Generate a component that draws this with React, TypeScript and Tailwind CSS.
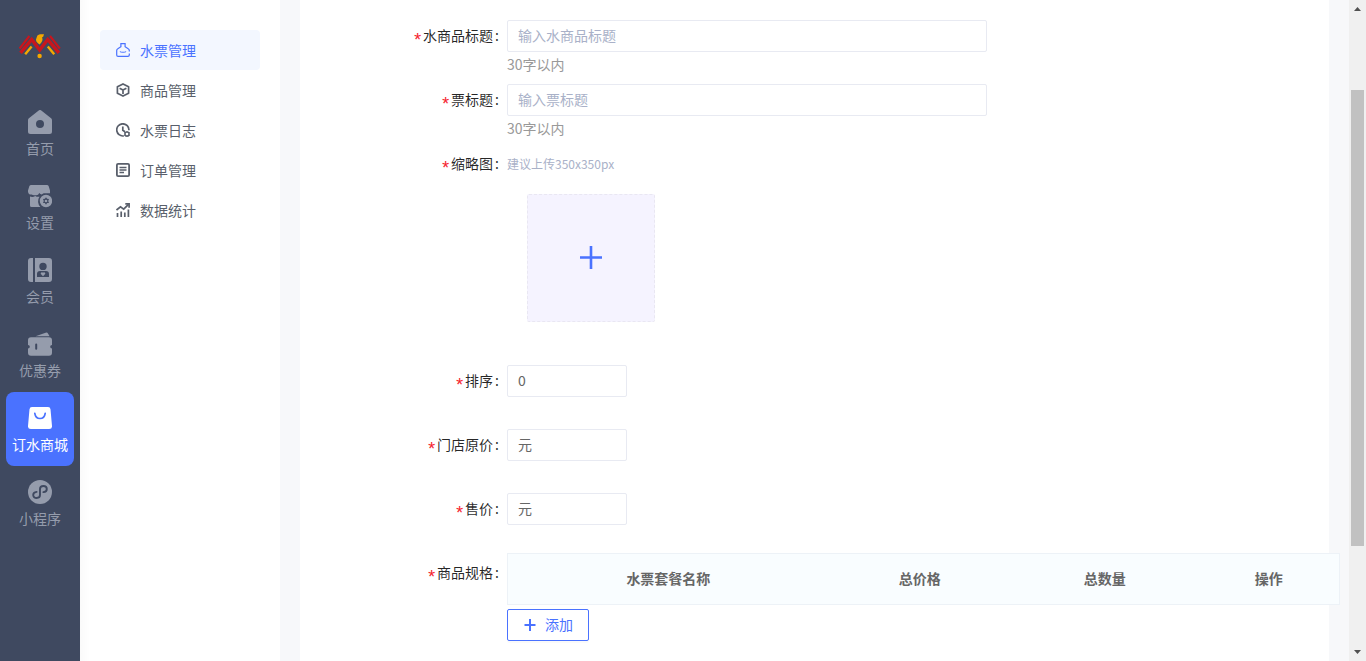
import React from "react";

type IconProps = { className?: string };

function Logo() {
  return (
    <svg viewBox="0 0 42 26" className="h-[26px] w-[42px]" aria-hidden="true">
      <g fill="none" stroke="#c8161d" strokeLinejoin="miter">
        <path d="M.6 15.500 10.400 3" strokeWidth="2.100" />
        <path d="M1.500 19.800 12.700 6.500 20.700 17 28.700 6.500 39.900 19.800" strokeWidth="3.400" />
        <path d="M40.800 15.500 31 3" strokeWidth="2.100" />
      </g>
      <path d="M6.200 21.200 12.600 13.500M35.200 21.200 28.800 13.500" stroke="#f5a800" strokeWidth="2.400" fill="none" />
      <path d="M18.400 2.600C20 .9 22.200 1 25 1.300L24.200 3.800 23.100 4.200C24.200 6.800 23 9 20.600 11.400 17.600 9.400 16.200 7.400 17.400 5.200Z" fill="#f5a800" />
      <circle cx="20.600" cy="23" r="2.200" fill="#f5a800" />
    </svg>
  );
}

function HomeIcon({ className }: IconProps) {
  return (
    <svg viewBox="0 0 24 24" className={className} fill="currentColor" aria-hidden="true">
      <path fillRule="evenodd" d="M10.7.5a2 2 0 0 1 2.6 0L23.1 8.300a2.400 2.400 0 0 1 .9 1.900V21.500A2.500 2.500 0 0 1 21.500 24h-19A2.500 2.500 0 0 1 0 21.500V10.200a2.400 2.400 0 0 1 .9-1.900ZM12 10a4 4 0 1 0 0 8 4 4 0 0 0 0-8Z" />
    </svg>
  );
}

function StoreIcon({ className }: IconProps) {
  return (
    <svg viewBox="0 0 24 24" className={className} fill="currentColor" aria-hidden="true">
      <path d="M3.200 1h15.600a2 2 0 0 1 1.900 1.300L22 6.500V9.200H15.800A8 8 0 0 0 13.800 10.400 3 3 0 0 1 11.300 9 3.600 3.600 0 0 1 7.200 11.200 4.500 4.500 0 0 1 3.600 10.600 3.400 3.400 0 0 1 0 7.700V6.500L1.300 2.300A2 2 0 0 1 3.200 1Z" />
      <path d="M2 12.600a8 8 0 0 0 2.200.3 6 6 0 0 0 3-.9 6 6 0 0 0 4.300.7A8 8 0 0 0 12.400 23H3.500A1.500 1.500 0 0 1 2 21.500Z" />
      <path fillRule="evenodd" d="M18 10.800a6.200 6.200 0 1 0 0 12.400 6.200 6.200 0 0 0 0-12.400Zm0 2.500 1.100 1.500 1.900.200-.8 1.900.8 2-1.900.2L18 20.700l-1.100-1.600-1.900-.2.8-2-.8-1.900 1.900-.2Z" />
      <circle cx="18" cy="17" r="1.300" />
    </svg>
  );
}

function MemberIcon({ className }: IconProps) {
  return (
    <svg viewBox="0 0 24 24" className={className} fill="currentColor" aria-hidden="true">
      <path d="M3 0h2v24H3a3 3 0 0 1-3-3V3a3 3 0 0 1 3-3Z" />
      <path fillRule="evenodd" d="M7 0h14a3 3 0 0 1 3 3v18a3 3 0 0 1-3 3H7Zm8 4.700a3.700 3.700 0 1 0 0 7.400 3.700 3.700 0 0 0 0-7.400ZM12 13a3 3 0 0 0-3 3v3h12v-3a3 3 0 0 0-3-3Z" />
      <path d="M15 18.300 12.900 16.100a1.200 1.200 0 0 1 2.100-1.300 1.200 1.200 0 0 1 2.100 1.300Z" />
    </svg>
  );
}

function CouponIcon({ className }: IconProps) {
  return (
    <svg viewBox="0 0 24 24" className={className} fill="currentColor" aria-hidden="true">
      <path d="M7.500 4.300 17.600.7a2 2 0 0 1 2.500 1l1.500 2.600Z" />
      <path fillRule="evenodd" d="M3 5.300h18a3 3 0 0 1 3 3V13a1.800 1.800 0 0 0 0 3.600v4.100a3 3 0 0 1-3 3H3a3 3 0 0 1-3-3v-4.100A1.800 1.800 0 0 0 0 13V8.300a3 3 0 0 1 3-3Zm5.200 6.200a1 1 0 0 0-1 1v4.300a1 1 0 0 0 2 0v-4.300a1 1 0 0 0-1-1Z" />
    </svg>
  );
}

function BagIcon({ className }: IconProps) {
  return (
    <svg viewBox="0 0 24 24" className={className} aria-hidden="true">
      <path d="M4 1h16a2.500 2.500 0 0 1 2.500 2.200L24 20a2.800 2.800 0 0 1-2.800 3H2.800A2.800 2.800 0 0 1 0 20L1.500 3.200A2.500 2.500 0 0 1 4 1Z" fill="currentColor" />
      <path d="M6.800 7.300c.5 3.400 2.600 5.200 5.200 5.200s4.700-1.800 5.200-5.200" fill="none" stroke="#4a72ff" strokeWidth="1.700" strokeLinecap="round" />
    </svg>
  );
}

function MiniProgramIcon({ className }: IconProps) {
  return (
    <svg viewBox="0 0 24 24" className={className} aria-hidden="true">
      <circle cx="12" cy="12" r="12" fill="currentColor" />
      <path d="M15.400 12.100c2-.2 3.400-1.400 3.400-3.200 0-1.700-1.500-2.900-3.400-2.900S12 7.200 12 8.900v6.200c0 1.700-1.500 2.900-3.400 2.900s-3.400-1.200-3.400-2.900c0-1.800 1.400-3 3.400-3.200" fill="none" stroke="#3f4960" strokeWidth="1.900" strokeLinecap="round" />
    </svg>
  );
}

function LineIcon({ children }: { children: React.ReactNode }) {
  return (
    <svg viewBox="0 0 14 14" className="size-3.5 shrink-0" fill="none" stroke="currentColor" strokeWidth="1.700" aria-hidden="true">
      {children}
    </svg>
  );
}

const mainNav = [
  { label: "首页", Icon: HomeIcon },
  { label: "设置", Icon: StoreIcon },
  { label: "会员", Icon: MemberIcon },
  { label: "优惠券", Icon: CouponIcon },
  { label: "订水商城", Icon: BagIcon, active: true },
  { label: "小程序", Icon: MiniProgramIcon },
];

const subNav = [
  {
    label: "水票管理",
    active: true,
    icon: (
      <g strokeWidth="1.200">
        <path d="M13.300 10.500v1.500a1.400 1.400 0 0 1-1.400 1.400H2.100A1.400 1.400 0 0 1 .7 12V7.400c0-.8.400-1.300 1.100-1.700L4.900 3.700V.6h4.200V3.700l3.100 2c.7.400 1.100.9 1.100 1.700v1" />
        <path d="M4 8.500c.8 1 5.200 1 6 0" />
      </g>
    ),
  },
  {
    label: "商品管理",
    icon: (
      <g strokeLinejoin="round">
        <path d="M7 .9 12.600 3.800v6.400L7 13.100 1.400 10.200V3.800Z" />
        <path d="M3.600 5.200 7 7l3.400-1.800M7 7v4" />
      </g>
    ),
  },
  {
    label: "水票日志",
    icon: (
      <g>
        <path d="M7.800 12.900A6.100 6.100 0 1 1 12.900 7.300" />
        <path d="M6.800 3.500v3.800l2.200 1.500" />
        <circle cx="11" cy="11" r="2.100" strokeWidth="1.500" />
        <path d="M11 8v1M11 13v1M8.300 9.500l.8.500M12.900 12l.8.500M8.300 12.500l.8-.5M12.900 10l.8-.5" strokeWidth="1" />
      </g>
    ),
  },
  {
    label: "订单管理",
    icon: (
      <g>
        <rect x=".9" y=".9" width="12.200" height="12.200" rx="1.200" strokeWidth="1.800" />
        <path d="M3.500 4.500h7M3.500 7h7M3.500 9.500h4.500" strokeWidth="1.400" />
      </g>
    ),
  },
  {
    label: "数据统计",
    icon: (
      <g>
        <path d="M1.500 10v4M5.200 8.500V14M8.800 9.500V14M12.400 6.500V14" strokeWidth="1.700" />
        <path d="M.5 7 4.500 3.800l3.200 2.400L12.500 1.300" />
        <path d="M9.300.9h3.800v3.800" />
      </g>
    ),
  },
];

function FormRow({
  label,
  htmlFor,
  className,
  children,
}: {
  label: string;
  htmlFor?: string;
  className?: string;
  children: React.ReactNode;
}) {
  const content = (
    <>
      <span className="pt-3 font-['Liberation_Mono',monospace] text-lg leading-none text-[#f5222d]">*</span>
      {label}
      <span className="mr-2 ml-0.5">:</span>
    </>
  );
  return (
    <div className={"flex " + (className ?? "")}>
      <div className="flex w-1/5 min-w-[207px] shrink-0 justify-end text-black/85">
        {htmlFor ? (
          <label htmlFor={htmlFor} className="flex h-[30px] items-center">
            {content}
          </label>
        ) : (
          <span className="flex h-[30px] items-center">{content}</span>
        )}
      </div>
      <div className="min-w-0 flex-1">{children}</div>
    </div>
  );
}

const inputBase =
  "block h-8 rounded-xs border border-[#e8eaf2] bg-white px-2.5 pb-0.5 text-sm text-[#666] outline-none placeholder:text-[#a9b1c8]";

export default function App() {
  return (
    <div className="flex min-h-screen bg-[#f7f8fa] font-['Noto_Sans_CJK_SC',sans-serif] text-sm">
      <nav className="w-20 shrink-0 bg-[#3f4960] px-1.5" aria-label="主导航">
        <div className="flex h-24 items-center justify-center pb-1">
          <Logo />
        </div>
        {mainNav.map(({ label, Icon, active }) => (
          <a
            key={label}
            href="#"
            className={
              "flex h-[74px] flex-col items-center gap-1 rounded-lg pt-3.5 leading-5 whitespace-nowrap " +
              (active ? "bg-[#4a72ff] text-white" : "text-[#959cac]")
            }
          >
            <Icon className="size-6" />
            {label}
          </a>
        ))}
      </nav>

      <nav className="w-[200px] shrink-0 bg-white bg-linear-to-r from-[#fafafa] to-white to-5% px-5 pt-[30px]" aria-label="子菜单">
        {subNav.map(({ label, icon, active }) => (
          <a
            key={label}
            href="#"
            className={
              "flex h-10 items-center gap-2.5 rounded-sm px-4 " +
              (active ? "bg-[#f3f7ff] text-[#4a72ff]" : "text-[#595f6b]")
            }
          >
            <LineIcon>{icon}</LineIcon>
            {label}
          </a>
        ))}
      </nav>

      <main className="mx-5 min-w-0 flex-1 bg-white py-5">
        <form onSubmit={(e) => e.preventDefault()}>
          <FormRow label="水商品标题" htmlFor="goods-title" className="h-16">
            <input id="goods-title" className={inputBase + " w-full max-w-[480px]"} placeholder="输入水商品标题" />
            <p className="mt-0.5 leading-5 text-[#999]">30字以内</p>
          </FormRow>
          <FormRow label="票标题" htmlFor="ticket-title" className="h-16">
            <input id="ticket-title" className={inputBase + " w-full max-w-[480px]"} placeholder="输入票标题" />
            <p className="mt-0.5 leading-5 text-[#999]">30字以内</p>
          </FormRow>
          <FormRow label="缩略图">
            <p className="text-xs leading-8 text-[#a9b1c8]">建议上传350x350px</p>
            <button
              type="button"
              aria-label="上传缩略图"
              className="mt-3.5 mb-[43px] ml-5 flex size-32 items-center justify-center rounded-xs border border-dashed border-[#e9e7f2] bg-[#f5f3ff] text-[#4a72ff]"
            >
              <svg viewBox="0 0 24 24" className="size-6" fill="none" stroke="currentColor" strokeWidth="2.600" aria-hidden="true">
                <path d="M12 0v23M1 11.500h22" />
              </svg>
            </button>
          </FormRow>
          <FormRow label="排序" htmlFor="sort" className="h-16">
            <input id="sort" className={inputBase + " w-[120px]"} defaultValue="0" />
          </FormRow>
          <FormRow label="门店原价" htmlFor="store-price" className="h-16">
            <input id="store-price" className={inputBase + " w-[120px]"} defaultValue="元" />
          </FormRow>
          <FormRow label="售价" htmlFor="sale-price" className="h-16">
            <input id="sale-price" className={inputBase + " w-[120px]"} defaultValue="元" />
          </FormRow>
          <FormRow label="商品规格">
            <div className="-mt-1 -mr-[11px]">
              <table className="w-full table-fixed border-separate border-spacing-0 border border-[#edf2f7] bg-[#f9fdff] text-[#666]">
                <thead>
                  <tr className="h-[50px]">
                    <th className="w-[38.6%] pb-0.5 font-bold">水票套餐名称</th>
                    <th className="w-[21.9%] pb-0.5 font-bold">总价格</th>
                    <th className="w-[22.6%] pb-0.5 font-bold">总数量</th>
                    <th className="pb-0.5 font-bold">操作</th>
                  </tr>
                </thead>
              </table>
            </div>
            <button
              type="button"
              className="mt-1 flex h-8 items-center gap-2 rounded-xs border border-[#4a72ff] bg-white px-[15px] text-[#4a72ff] shadow-[0_2px_0_rgba(0,0,0,0.02)]"
            >
              <svg viewBox="0 0 14 14" className="size-3.5" fill="none" stroke="currentColor" strokeWidth="2" aria-hidden="true">
                <path d="M7 1v12M1.500 7h11" />
              </svg>
              <span className="pb-0.5">添加</span>
            </button>
          </FormRow>
        </form>
      </main>

      <div className="flex w-[17px] shrink-0 flex-col bg-[#f0f0f0]" aria-hidden="true">
        <svg viewBox="0 0 17 17" className="size-[17px]" fill="#505050">
          <path d="M5 11h7L8.500 7Z" />
        </svg>
        <div className="grow-73" />
        <div className="mx-0.5 grow-456 bg-[#c1c1c1]" />
        <div className="grow-98" />
        <svg viewBox="0 0 17 17" className="size-[17px]" fill="#505050">
          <path d="M5 6h7L8.500 10Z" />
        </svg>
      </div>
    </div>
  );
}
